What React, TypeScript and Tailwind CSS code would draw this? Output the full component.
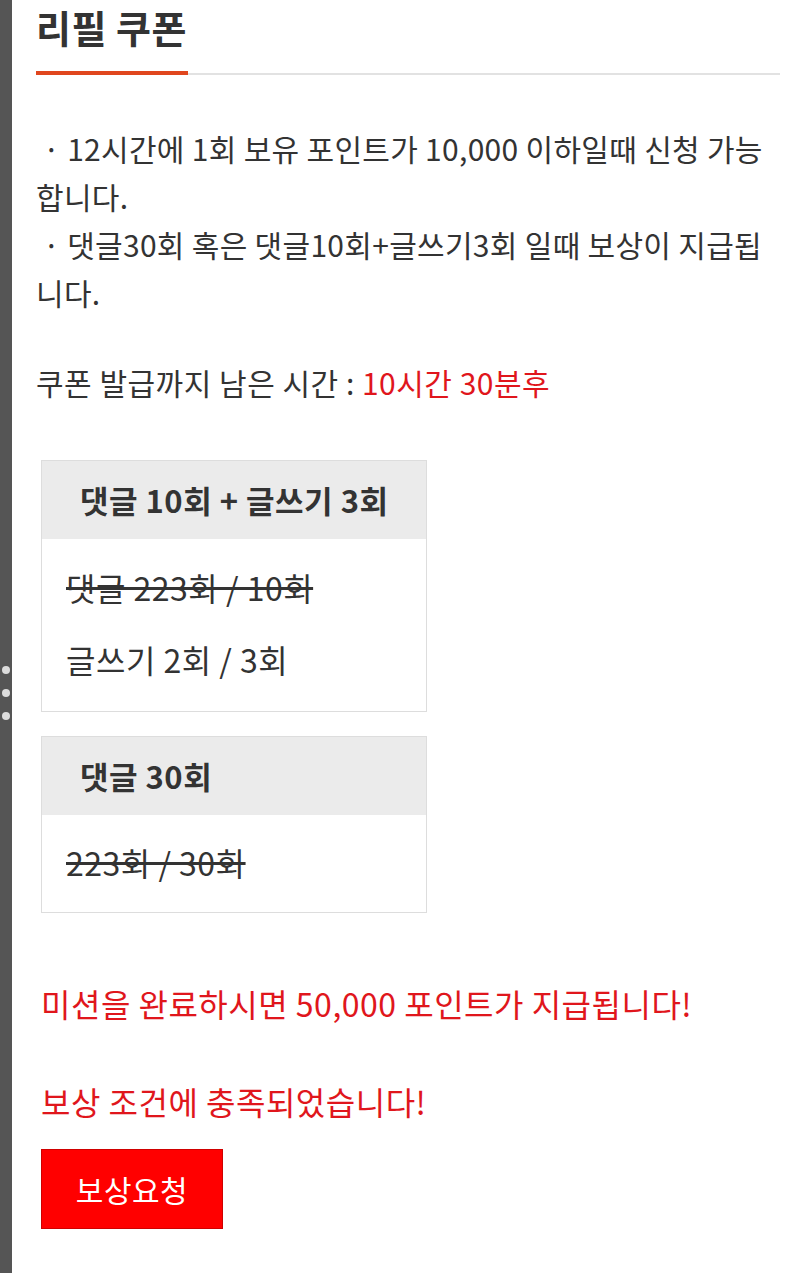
import React from "react";

const font = { fontFamily: '"Noto Sans CJK KR", "Noto Sans", sans-serif' };

export default function App() {
  return (
    <div className="flex min-h-[1273px] w-[800px] bg-white text-[#333]" style={font}>
      <div className="w-[12px] shrink-0 bg-[#555555] flex flex-col items-center pt-[666px] gap-[15px]">
        <span className="block w-[8px] h-[8px] rounded-full bg-[#dcdcdc]" />
        <span className="block w-[8px] h-[8px] rounded-full bg-[#dcdcdc]" />
        <span className="block w-[8px] h-[8px] rounded-full bg-[#dcdcdc]" />
      </div>
      <div className="flex-1 pl-[24px] pr-[20px]">
        <div className="flex items-start border-b-2 border-[#e2e2e2]">
          <h2 className="w-[152px] border-b-4 border-[#e0461e] -mb-[2px] pb-[17px] text-[38px] font-bold leading-[54px] tracking-[0.5px] text-[#333] whitespace-nowrap">
            리필 쿠폰
          </h2>
        </div>

        <div className="mt-[49px] text-[30px] leading-[48px] tracking-[0.3px] whitespace-nowrap">
          <p>{"\u00A0· 12시간에 1회 보유 포인트가 10,000 이하일때 신청 가능"}</p>
          <p>합니다.</p>
          <p>{"\u00A0· 댓글30회 혹은 댓글10회+글쓰기3회 일때 보상이 지급됩"}</p>
          <p>니다.</p>
        </div>

        <p className="mt-[42px] text-[30px] leading-[48px] tracking-[0.5px] whitespace-nowrap">
          쿠폰 발급까지 남은 시간 : <span className="text-[#e0161c]">10시간 30분후</span>
        </p>

        <div className="ml-[5px] mt-[54px] w-[386px] border border-[#dddddd]">
          <div className="h-[78px] bg-[#ebebeb] flex items-center pl-[38px] text-[31px] font-bold tracking-[0.5px] whitespace-nowrap">
            댓글 10회 + 글쓰기 3회
          </div>
          <div className="pl-[24px] pt-[24px] pb-[28px] flex flex-col gap-[24px] text-[32px] leading-[48px] tracking-[0.5px] whitespace-nowrap">
            <p className="line-through">댓글 223회 / 10회</p>
            <p>글쓰기 2회 / 3회</p>
          </div>
        </div>

        <div className="ml-[5px] mt-[24px] w-[386px] border border-[#dddddd]">
          <div className="h-[78px] bg-[#ebebeb] flex items-center pl-[38px] text-[31px] font-bold tracking-[0.5px] whitespace-nowrap">
            댓글 30회
          </div>
          <div className="pl-[24px] pt-[23px] pb-[26px] text-[32px] leading-[48px] tracking-[0.5px] whitespace-nowrap">
            <p className="line-through">223회 / 30회</p>
          </div>
        </div>

        <p className="ml-[5px] mt-[66px] text-[32px] leading-[48px] tracking-[0.5px] text-[#e0161c] whitespace-nowrap">
          미션을 완료하시면 50,000 포인트가 지급됩니다!
        </p>
        <p className="ml-[5px] mt-[50px] text-[32px] leading-[48px] tracking-[0.5px] text-[#e0161c] whitespace-nowrap">
          보상 조건에 충족되었습니다!
        </p>
        <button className="ml-[5px] mt-[24px] w-[182px] h-[80px] bg-[#ff0000] border border-[#d00000] text-white text-[30px] tracking-[0.5px] flex items-center justify-center">
          보상요청
        </button>
      </div>
    </div>
  );
}
